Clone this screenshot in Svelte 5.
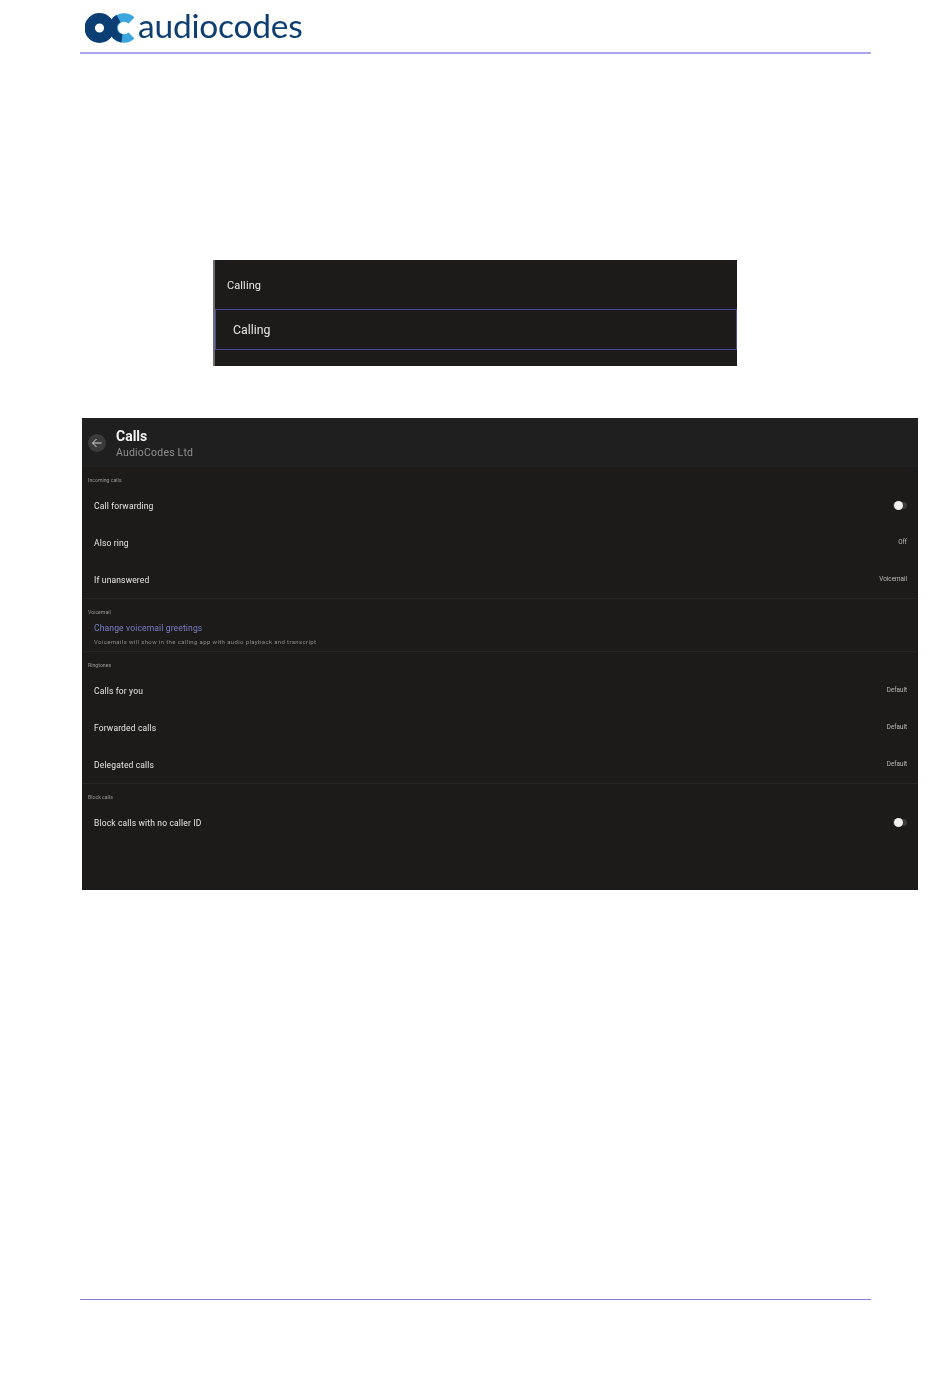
<script lang="ts">
  const sections = [
    {
      label: 'Incoming calls',
      rows: [
        { name: 'Call forwarding', toggle: true },
        { name: 'Also ring', value: 'Off' },
        { name: 'If unanswered', value: 'Voicemail' }
      ]
    },
    {
      label: 'Voicemail',
      link: 'Change voicemail greetings',
      note: 'Voicemails will show in the calling app with audio playback and transcript',
      rows: []
    },
    {
      label: 'Ringtones',
      rows: [
        { name: 'Calls for you', value: 'Default' },
        { name: 'Forwarded calls', value: 'Default' },
        { name: 'Delegated calls', value: 'Default' }
      ]
    },
    {
      label: 'Block calls',
      rows: [{ name: 'Block calls with no caller ID', toggle: true }]
    }
  ];
</script>

<div class="page">
  <header>
    <svg class="mark" viewBox="0 0 52 32" width="52" height="32" aria-hidden="true">
      <circle cx="14.500" cy="16" r="9.800" fill="none" stroke="#0b3f73" stroke-width="10.400" />
      <path d="M46.500 8.500A10.500 10.500 0 1 0 46.500 23.500" fill="none" stroke="#3aa6dd" stroke-width="8.500" />
      <path d="M33.500 6.500A10.500 10.500 0 0 0 37 26.300" fill="none" stroke="#0b3f73" stroke-width="8.500" />
    </svg>
    <span class="wordmark">audiocodes</span>
  </header>

  <section class="menu">
    <div class="menu-title">Calling</div>
    <div class="menu-item">Calling</div>
  </section>

  <section class="panel">
    <div class="panel-head">
      <span class="back">
        <svg viewBox="0 0 12 12" width="12" height="12" aria-hidden="true">
          <path d="M10.500 6H1.500M5.500 2 1.500 6l4 4" fill="none" stroke="#d6d6d6" stroke-width="1" />
        </svg>
      </span>
      <div>
        <div class="title">Calls</div>
        <div class="sub">AudioCodes Ltd</div>
      </div>
    </div>

    {#each sections as s, i (s.label)}
      <div class="group" class:ruled={i > 0}>
        <div class="label">{s.label}</div>
        {#if s.link}
          <div class="link">{s.link}</div>
          <div class="note">{s.note}</div>
        {/if}
        {#each s.rows as row (row.name)}
          <div class="row">
            <span class="name">{row.name}</span>
            {#if row.toggle}
              <span class="toggle"><i></i></span>
            {:else}
              <span class="value">{row.value}</span>
            {/if}
          </div>
        {/each}
      </div>
    {/each}
  </section>

  <footer></footer>
</div>

<style>
  :global(body) {
    background: #fff;
    font-family: Roboto, "Liberation Sans", sans-serif;
  }

  .page {
    position: relative;
    height: 1378px;
    overflow: hidden;
    display: flex;
    flex-direction: column;
  }

  header {
    margin: 0 79px 0 80px;
    height: 40px;
    border-bottom: 2px solid #a9a7f0;
    display: flex;
    align-items: flex-start;
    gap: 1px;
    padding: 12px 0 0 5px;
    box-sizing: content-box;
    filter: blur(0.3px);
  }

  .mark {
    flex: none;
  }

  .wordmark {
    font-family: Lato, sans-serif;
    font-weight: 400;
    font-size: 33.500px;
    line-height: 26px;
    color: #0f3f70;
    letter-spacing: -0.22px;
  }

  .menu {
    margin: 206px 0 0 213px;
    width: 524px;
    height: 106px;
    background: #1c1b1a;
    border-left: 2px solid #6e6e6e;
    box-sizing: border-box;
    color: #e8e8e8;
    filter: blur(0.3px);
  }

  .menu-title {
    height: 49px;
    padding-left: 12px;
    line-height: 51px;
    font-size: 11px;
    letter-spacing: 0.1px;
  }

  .menu-item {
    height: 41px;
    box-sizing: border-box;
    border: 1px solid #4a4a9a;
    padding-left: 17px;
    line-height: 41px;
    font-size: 12.300px;
  }

  .panel {
    margin: 52px 0 0 82px;
    width: 836px;
    height: 472px;
    background: #1c1b1a;
    color: #e6e6e6;
    filter: blur(0.35px);
  }

  .panel-head {
    height: 49px;
    background: #1f1f1f;
    display: flex;
    align-items: center;
    gap: 10px;
    padding-left: 6px;
  }

  .panel-head > div {
    padding-top: 3px;
  }

  .back {
    width: 18px;
    height: 18px;
    border-radius: 50%;
    background: #3b3b3b;
    display: flex;
    align-items: center;
    justify-content: center;
  }

  .title {
    font-size: 14px;
    font-weight: 700;
    line-height: 17px;
    color: #f2f2f2;
  }

  .sub {
    font-size: 10.500px;
    line-height: 16px;
    color: #8f8f8f;
    letter-spacing: 0.2px;
  }

  .group.ruled {
    border-top: 1px solid #262625;
  }

  .label {
    height: 20px;
    box-sizing: border-box;
    padding: 8px 0 0 6px;
    line-height: 10px;
    font-size: 5.200px;
    color: #9a9a9a;
  }

  .row {
    height: 37px;
    display: flex;
    align-items: center;
    justify-content: space-between;
    padding: 0 11px 0 12px;
    font-size: 8.500px;
  }

  .name {
    letter-spacing: 0.15px;
  }

  .value {
    font-size: 6.300px;
    color: #bdbdbd;
    margin-top: -2px;
  }

  .toggle {
    position: relative;
    width: 14px;
    height: 7px;
    margin-top: -1px;
    border-radius: 3.500px;
    background: #3a3a3a;
  }

  .toggle i {
    position: absolute;
    left: 0.500px;
    top: -1px;
    width: 9px;
    height: 9px;
    border-radius: 50%;
    background: #f0f0f0;
  }

  .link {
    padding-left: 12px;
    font-size: 8.500px;
    line-height: 18px;
    color: #7a7fc8;
    letter-spacing: 0.15px;
  }

  .note {
    padding: 0 0 4px 12px;
    font-size: 6px;
    line-height: 10px;
    color: #8c8c8c;
    letter-spacing: 0.37px;
  }

  footer {
    position: absolute;
    left: 80px;
    right: 79px;
    top: 1299px;
    border-top: 1px solid #8583d8;
  }
</style>
